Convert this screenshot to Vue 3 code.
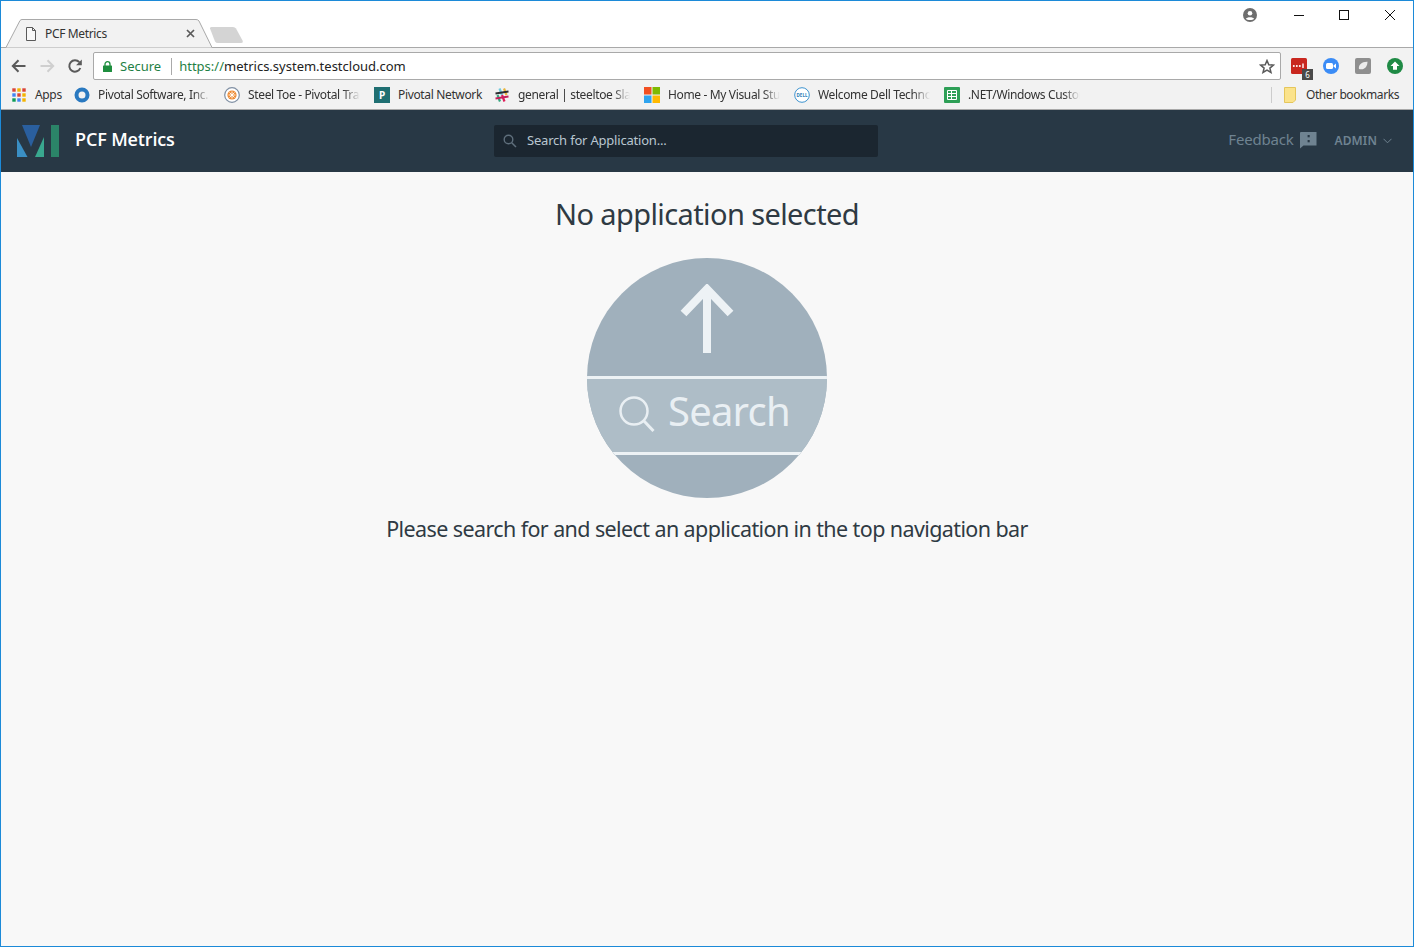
<template>
  <div class="window">
    <div class="tabstrip">
      <div class="tab">
        <svg class="tab-shape" width="207" height="29" viewBox="0 0 207 29">
          <path d="M0 28.5H1L15 1.5Q16 .5 17 .5H191Q193 .5 194 2L207 28.5" fill="#f2f2f2" stroke="#a9a9a9" />
        </svg>
        <svg class="page-icon" width="12" height="14" viewBox="0 0 12 14">
          <path d="M1.5 .5H7.5L10.5 3.5V13.5H1.5ZM7.5 .5V3.5H10.5" fill="#f8f8f8" stroke="#5a5a5a" />
        </svg>
        <span class="tab-title">PCF Metrics</span>
        <svg class="tab-close" width="9" height="9" viewBox="0 0 9 9">
          <path d="M1 1L8 8M8 1L1 8" stroke="#5a5a5a" stroke-width="1.7" />
        </svg>
      </div>
      <svg class="new-tab" width="36" height="18" viewBox="0 0 36 18">
        <path d="M1 2.500Q.5 1 2.500 1H24Q26 1 27 2.500L33.500 14.500Q34.500 17 32 17H9Q7 17 6 15.500Z" fill="#d4d4d4" />
      </svg>
      <div class="spacer"></div>
      <svg class="profile" width="14" height="14" viewBox="0 0 14 14">
        <circle cx="7" cy="7" r="7" fill="#6e6e6e" />
        <circle cx="7" cy="5.200" r="2.300" fill="#fff" />
        <path d="M2.800 10.800C3.800 8.700 10.200 8.700 11.200 10.800C10 12.400 4 12.400 2.800 10.800Z" fill="#fff" />
      </svg>
      <div class="win-controls">
        <svg width="46" height="30" viewBox="0 0 46 30"><path d="M19 15.500H29" stroke="#111" /></svg>
        <svg width="46" height="30" viewBox="0 0 46 30"><rect x="18.500" y="10.500" width="9" height="9" fill="none" stroke="#111" /></svg>
        <svg width="46" height="30" viewBox="0 0 46 30"><path d="M18 10L28 20M28 10L18 20" stroke="#111" /></svg>
      </div>
    </div>

    <div class="toolbar">
      <svg width="16" height="16" viewBox="0 0 16 16" class="nav-btn">
        <path d="M14.500 8H2M7.500 2.200L1.800 8L7.500 13.800" fill="none" stroke="#5a5a5a" stroke-width="2" />
      </svg>
      <svg width="16" height="16" viewBox="0 0 16 16" class="nav-btn">
        <path d="M1.500 8H14M8.500 2.200L14.200 8L8.500 13.800" fill="none" stroke="#cfcfcf" stroke-width="2" />
      </svg>
      <svg width="16" height="16" viewBox="0 0 16 16" class="nav-btn">
        <path d="M13.300 10A5.700 5.700 0 1 1 12.300 4.200" fill="none" stroke="#5a5a5a" stroke-width="2" />
        <path d="M14.800 1.500V7.200H9.100Z" fill="#5a5a5a" />
      </svg>
      <div class="omnibox">
        <svg width="9" height="11" viewBox="0 0 9 11">
          <path d="M2 5V3.200a2.500 2.500 0 0 1 5 0V5" fill="none" stroke="#1e8e3e" stroke-width="1.300" />
          <rect y="4.500" width="9" height="6.500" rx=".6" fill="#1e8e3e" />
        </svg>
        <span class="secure">Secure</span>
        <span class="omni-sep"></span>
        <span class="url"><span class="scheme">https://</span>metrics.system.testcloud.com</span>
        <div class="spacer"></div>
        <svg width="16" height="15" viewBox="0 0 16 15">
          <path d="M8 1.500L9.800 5.700L14.400 6.100L10.900 9.100L12 13.500L8 11.200L4 13.500L5.100 9.100L1.600 6.100L6.200 5.700Z" fill="none" stroke="#5a5a5a" stroke-width="1.500" />
        </svg>
      </div>
      <div class="extensions">
        <div class="ext">
          <svg width="16" height="16" viewBox="0 0 16 16">
            <rect width="16" height="16" rx="1.500" fill="#c9271f" />
            <circle cx="2.800" cy="8" r="1" fill="#fff" />
            <circle cx="5.800" cy="8" r="1" fill="#fff" />
            <circle cx="8.800" cy="8" r="1" fill="#fff" />
            <path d="M12 5.500V10" stroke="#fff" stroke-width="1.400" />
          </svg>
          <span class="ext-badge">6</span>
        </div>
        <div class="ext">
          <svg width="16" height="16" viewBox="0 0 16 16">
            <circle cx="8" cy="8" r="8" fill="#3b8cf6" />
            <rect x="3" y="5" width="7" height="6" rx="1.500" fill="#fff" />
            <path d="M10.500 7.500L13 5.500V10.500L10.500 8.500Z" fill="#fff" />
          </svg>
        </div>
        <div class="ext">
          <svg width="16" height="16" viewBox="0 0 16 16">
            <rect width="16" height="16" rx="2" fill="#8f8f8f" />
            <path d="M4 11C3 7 7 3.500 12.500 3.800C12.500 9 9 12.500 4 11Z" fill="#ececec" />
          </svg>
        </div>
        <div class="ext">
          <svg width="16" height="16" viewBox="0 0 16 16">
            <circle cx="8" cy="8" r="8" fill="#1f8a45" />
            <path d="M8 3.500L12.500 8H10V11.800H6V8H3.500Z" fill="#fff" />
          </svg>
        </div>
      </div>
    </div>

    <div class="bookmarks">
      <div class="bm bm-apps">
        <svg width="14" height="14" viewBox="0 0 14 14">
          <rect v-for="dot in appDots" :key="dot.x + '-' + dot.y" :x="dot.x" :y="dot.y" width="3.400" height="3.400" :fill="dot.color" />
        </svg>
        <span class="bm-text">Apps</span>
      </div>
      <div v-for="b in bookmarks" :key="b.label" class="bm" :class="{ short: !b.fade }">
        <span class="bm-icon">
          <svg v-if="b.icon === 'pivotal'" width="16" height="16" viewBox="0 0 16 16">
            <circle cx="8" cy="8" r="5.500" fill="none" stroke="#2a79c0" stroke-width="4" />
          </svg>
          <svg v-else-if="b.icon === 'steeltoe'" width="16" height="16" viewBox="0 0 16 16">
            <circle cx="8" cy="8" r="7.300" fill="#fff" stroke="#7f8fa3" stroke-width="1.200" />
            <circle cx="8" cy="8" r="4.600" fill="#ee8b34" />
            <path d="M8 4.500V11.500M4.500 8H11.500M5.500 5.500L10.500 10.500M10.500 5.500L5.500 10.500" stroke="#fff" stroke-width=".9" />
          </svg>
          <span v-else-if="b.icon === 'network'" class="p-icon">P</span>
          <svg v-else-if="b.icon === 'slack'" width="16" height="16" viewBox="0 0 16 16">
            <path d="M5.500 1.500L8 8" stroke="#6ecadc" stroke-width="2.200" />
            <path d="M10 1.500L12.500 8" stroke="#e8b43a" stroke-width="2.200" />
            <path d="M3.500 8L6 14.500" stroke="#35a57f" stroke-width="2.200" />
            <path d="M8 8L10.500 14.500" stroke="#e01e5a" stroke-width="2.200" />
            <path d="M1.500 6.500L14.500 4.500" stroke="#2c2d30" stroke-width="2" />
            <path d="M1.500 11.500L14.500 9.500" stroke="#c4205c" stroke-width="2" />
          </svg>
          <svg v-else-if="b.icon === 'microsoft'" width="16" height="16" viewBox="0 0 16 16">
            <rect width="7.500" height="7.500" fill="#f25022" />
            <rect x="8.500" width="7.500" height="7.500" fill="#7fba00" />
            <rect y="8.500" width="7.500" height="7.500" fill="#2fa4ef" />
            <rect x="8.500" y="8.500" width="7.500" height="7.500" fill="#ffb900" />
          </svg>
          <svg v-else-if="b.icon === 'dell'" width="16" height="16" viewBox="0 0 16 16">
            <circle cx="8" cy="8" r="7.300" fill="#fff" stroke="#3d93cf" />
            <text x="8" y="9.600" text-anchor="middle" font-size="4.500" font-weight="700" fill="#2c7fb8">DELL</text>
          </svg>
          <svg v-else-if="b.icon === 'sheets'" width="16" height="16" viewBox="0 0 16 16">
            <rect width="16" height="16" rx="1" fill="#2d9f56" />
            <path d="M3.500 3.500H12.500V12.500H3.500ZM3.500 6.500H12.500M3.500 9.500H12.500M7.500 3.500V12.500" fill="none" stroke="#fff" />
          </svg>
        </span>
        <span class="bm-text" :class="{ fade: b.fade }">{{ b.label }}</span>
      </div>
      <div class="spacer"></div>
      <span class="bm-sep"></span>
      <svg width="12" height="16" viewBox="0 0 12 16">
        <path d="M.5 .5H11.500V13L9 15.500H.5Z" fill="#fbe38c" stroke="#e5c65c" />
      </svg>
      <span class="bm-text other">Other bookmarks</span>
    </div>

    <header class="topnav">
      <svg class="logo" width="42" height="32" viewBox="0 0 42 32">
        <path d="M5 0H23L14 22Z" fill="#2a5f9e" />
        <path d="M0 13L10.500 32H0Z" fill="#3a8fc4" />
        <path d="M27 12V32H18Z" fill="#39a88f" />
        <rect x="34" width="8" height="32" fill="#2b8468" />
      </svg>
      <span class="brand">PCF Metrics</span>
      <label class="app-search">
        <svg width="14" height="14" viewBox="0 0 14 14">
          <circle cx="5.500" cy="5.500" r="4.300" fill="none" stroke="#5f6f7c" stroke-width="1.400" />
          <path d="M8.700 8.700L13 13" stroke="#5f6f7c" stroke-width="1.500" />
        </svg>
        <span class="app-search-text">Search for Application...</span>
      </label>
      <div class="nav-right">
        <span class="feedback">Feedback</span>
        <svg class="feedback-icon" width="17" height="17" viewBox="0 0 17 17">
          <path d="M1 0H16.500V13.500H3.500L0 16.500V1Q0 0 1 0Z" fill="#6f8391" />
          <rect x="7.600" y="3" width="2.100" height="2.300" fill="#283845" />
          <rect x="7.600" y="8" width="2.100" height="2.300" fill="#283845" />
        </svg>
        <span class="admin">ADMIN</span>
        <svg width="9" height="6" viewBox="0 0 9 6">
          <path d="M.5 .8L4.500 4.800L8.500 .8" fill="none" stroke="#6f8391" />
        </svg>
      </div>
    </header>

    <main class="content">
      <h1 class="heading">No application selected</h1>
      <div class="illustration">
        <div class="ill-top">
          <svg width="54" height="70" viewBox="0 0 54 70">
            <path d="M27 69V5M3.500 29.500L27 5L50.500 29.500" fill="none" stroke="#edf2f5" stroke-width="8" />
          </svg>
        </div>
        <div class="ill-band">
          <svg width="36" height="36" viewBox="0 0 36 36">
            <circle cx="15" cy="15" r="13.500" fill="none" stroke="#e9eff3" stroke-width="2.500" />
            <path d="M24.500 24.500L34.500 35" stroke="#e9eff3" stroke-width="3" />
          </svg>
          <span class="ill-search">Search</span>
        </div>
      </div>
      <p class="subtext">Please search for and select an application in the top navigation bar</p>
    </main>
  </div>
</template>

<script setup>
const colors = ['#db4437', '#f4b400', '#db4437', '#4285f4', '#db4437', '#f4b400', '#0f9d58', '#4285f4', '#f4b400']
const appDots = colors.map((color, i) => ({
  x: (i % 3) * 5 + 0.3,
  y: Math.floor(i / 3) * 5 + 0.3,
  color
}))

const bookmarks = [
  { icon: 'pivotal', label: 'Pivotal Software, Inc.', fade: true },
  { icon: 'steeltoe', label: 'Steel Toe - Pivotal Tracker', fade: true },
  { icon: 'network', label: 'Pivotal Network', fade: false },
  { icon: 'slack', label: 'general | steeltoe Slack', fade: true },
  { icon: 'microsoft', label: 'Home - My Visual Studio', fade: true },
  { icon: 'dell', label: 'Welcome Dell Technologies', fade: true },
  { icon: 'sheets', label: '.NET/Windows Customers', fade: true }
]
</script>

<style>
html, body {
  margin: 0;
  background: #fff;
}
</style>

<style scoped>
.window {
  box-sizing: border-box;
  height: 947px;
  border: 1px solid #1c8ad8;
  display: flex;
  flex-direction: column;
  overflow: hidden;
  font-family: "Noto Sans", "Open Sans", sans-serif;
  background: #f8f8f8;
}

.spacer {
  flex: 1;
}

/* window chrome */
.tabstrip {
  height: 46px;
  flex: none;
  display: flex;
  align-items: flex-start;
  background: #fff;
  border-bottom: 1px solid #a9a9a9;
  box-sizing: content-box;
}

.tab {
  position: relative;
  width: 207px;
  height: 29px;
  margin: 18px 0 0 4px;
  display: flex;
  align-items: center;
  z-index: 1;
}

.tab-shape {
  position: absolute;
  left: 0;
  top: 0;
  overflow: visible;
}

.page-icon {
  position: relative;
  margin-left: 20px;
}

.tab-title {
  position: relative;
  margin-left: 8px;
  font-size: 12px;
  letter-spacing: -0.35px;
  color: #333;
}

.tab-close {
  position: relative;
  margin-left: 79px;
}

.new-tab {
  margin: 25px 0 0 -3px;
}

.profile {
  margin: 7px 18px 0 0;
}

.win-controls {
  display: flex;
  margin-top: -1px;
}

.win-controls svg {
  display: block;
}

.toolbar {
  box-sizing: border-box;
  height: 34px;
  flex: none;
  display: flex;
  align-items: center;
  background: #f2f2f2;
  padding: 2px 0 0 10px;
}

.nav-btn {
  flex: none;
  margin-right: 12px;
}

.omnibox {
  box-sizing: border-box;
  width: 1188px;
  flex: none;
  height: 28px;
  margin-left: -2px;
  display: flex;
  align-items: center;
  padding: 0 5px 0 9px;
  background: #fff;
  border: 1px solid #a9a9a9;
  border-radius: 2px;
  font-size: 13px;
}

.secure {
  margin-left: 8px;
  color: #1f7f45;
}

.omni-sep {
  width: 1px;
  height: 17px;
  background: #aaa;
  margin: 0 7px 0 10px;
}

.url {
  color: #222;
}

.scheme {
  color: #1f7f45;
}

.extensions {
  flex: none;
  display: flex;
  gap: 16px;
  margin-left: 10px;
}

.ext {
  position: relative;
  width: 16px;
  height: 16px;
  display: flex;
}

.ext svg {
  display: block;
}

.ext-badge {
  position: absolute;
  left: 11px;
  top: 11px;
  width: 11px;
  height: 11px;
  background: #4a4a4a;
  color: #fff;
  font-size: 8px;
  line-height: 11px;
  text-align: center;
}

.bookmarks {
  height: 28px;
  flex: none;
  box-sizing: border-box;
  display: flex;
  align-items: center;
  background: #f2f2f2;
  border-bottom: 1px solid #a9a9a9;
  padding: 0 14px 2px 11px;
  font-size: 12px;
  color: #333;
}

.bm {
  width: 150px;
  flex: none;
  display: flex;
  align-items: center;
}

.bm.short {
  width: 120px;
}

.bm-apps {
  width: 62px;
  gap: 9px;
}

.bm-icon {
  width: 16px;
  height: 16px;
  margin-right: 8px;
  flex: none;
  display: block;
}

.bm-icon svg {
  display: block;
}

.p-icon {
  display: block;
  height: 16px;
  background: #1f6f72;
  color: #fff;
  font-size: 10px;
  font-weight: 700;
  line-height: 16px;
  text-align: center;
}

.bm-text {
  white-space: nowrap;
  letter-spacing: -0.35px;
}

.bm-text.fade {
  width: 112px;
  overflow: hidden;
  -webkit-mask-image: linear-gradient(to right, #000 85%, transparent 100%);
  mask-image: linear-gradient(to right, #000 85%, transparent 100%);
}

.bm-sep {
  width: 1px;
  height: 16px;
  background: #ccc;
  margin-right: 12px;
}

.bm-text.other {
  margin-left: 10px;
  letter-spacing: -0.42px;
}

/* app */
.topnav {
  height: 62px;
  flex: none;
  box-sizing: border-box;
  display: flex;
  align-items: center;
  background: #283845;
  padding-left: 16px;
}

.logo {
  flex: none;
}

.brand {
  margin: 0 0 5px 16px;
  width: 419px;
  font-family: "Open Sans", "Noto Sans", sans-serif;
  font-size: 18px;
  font-weight: 600;
  color: #fff;
  letter-spacing: -0.15px;
}

.app-search {
  box-sizing: border-box;
  width: 384px;
  height: 32px;
  display: flex;
  align-items: center;
  gap: 10px;
  padding-left: 9px;
  background: #1b2630;
  border-radius: 2px;
}

.app-search-text {
  margin-bottom: 3px;
  font-size: 13px;
  letter-spacing: -0.2px;
  color: #b9c6d0;
}

.nav-right {
  flex: 1;
  display: flex;
  align-items: center;
  justify-content: flex-end;
  padding-right: 21px;
  color: #6f8391;
}

.feedback {
  font-size: 15px;
  margin: 0 6px 5px 0;
  letter-spacing: -0.2px;
}

.feedback-icon {
  margin-bottom: 2px;
}

.admin {
  margin: 0 6px 2px 18px;
  font-size: 12px;
  font-weight: 600;
  letter-spacing: 0.1px;
}

.content {
  flex: 1;
  display: flex;
  flex-direction: column;
  align-items: center;
  background: #f8f8f8;
  color: #2f3a43;
}

.heading {
  margin: 23px 0 0;
  font-size: 29px;
  line-height: 38px;
  font-weight: 400;
  letter-spacing: -0.6px;
  color: #2f3a43;
}

.illustration {
  width: 240px;
  height: 240px;
  margin-top: 25px;
  border-radius: 50%;
  overflow: hidden;
  background: #a0b0bc;
  display: flex;
  flex-direction: column;
}

.ill-top {
  height: 118px;
  flex: none;
  display: flex;
  justify-content: center;
  padding-top: 26px;
  box-sizing: border-box;
}

.ill-band {
  box-sizing: border-box;
  height: 79px;
  flex: none;
  display: flex;
  align-items: center;
  gap: 13px;
  padding: 0 0 3px 32px;
  background: #aebdc7;
  border-top: 3px solid #edf2f5;
  border-bottom: 3px solid #edf2f5;
}

.ill-search {
  margin-bottom: 6px;
  font-size: 40px;
  line-height: 48px;
  letter-spacing: -0.8px;
  color: #e9eff3;
}

.subtext {
  margin: 16px 0 0;
  font-size: 21.500px;
  line-height: 30px;
  letter-spacing: -0.6px;
  color: #2f3a43;
}
</style>
